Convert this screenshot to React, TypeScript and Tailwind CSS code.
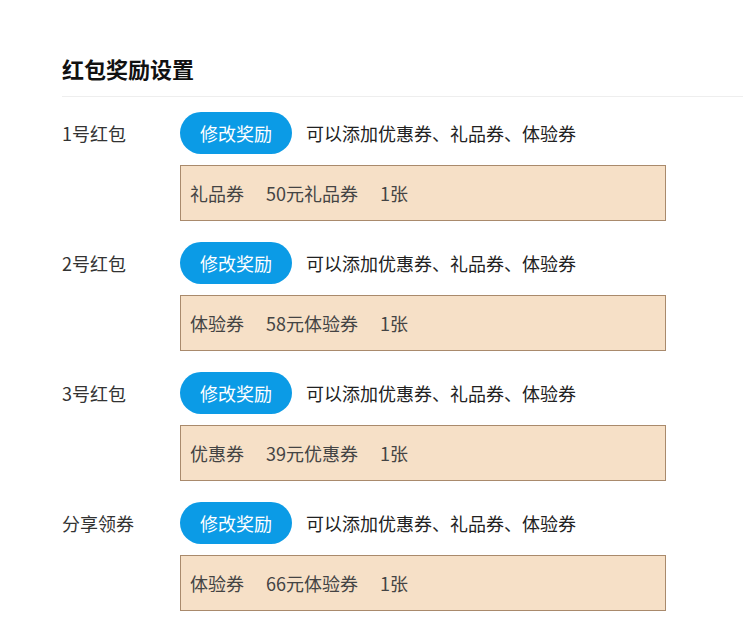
import React from "react";

const rows = [
  { label: "1号红包", items: ["礼品券", "50元礼品券", "1张"] },
  { label: "2号红包", items: ["体验券", "58元体验券", "1张"] },
  { label: "3号红包", items: ["优惠券", "39元优惠券", "1张"] },
  { label: "分享领券", items: ["体验券", "66元体验券", "1张"] },
];

export default function App() {
  return (
    <div
      className="min-h-[640px] bg-white pl-[62px] pt-[52px]"
      style={{ fontFamily: '"Noto Sans CJK SC", "Noto Sans", sans-serif' }}
    >
      <div className="h-[45px] border-b border-[#eeeeee]">
        <h1 className="text-[22px] leading-[32px] font-bold text-[#111]">红包奖励设置</h1>
      </div>
      <div className="pt-[15px] flex flex-col gap-[21px]">
        {rows.map((r) => (
          <div key={r.label} className="flex">
            <div className="w-[118px] h-[42px] flex items-center text-[18px] text-[#333]">{r.label}</div>
            <div className="flex flex-col gap-[11px]">
              <div className="flex items-center h-[42px]">
                <button className="w-[112px] h-[42px] rounded-full bg-[#0b9be6] text-white text-[18px] flex items-center justify-center">
                  修改奖励
                </button>
                <span className="ml-[14px] text-[18px] text-[#222]">可以添加优惠券、礼品券、体验券</span>
              </div>
              <div className="w-[486px] h-[56px] bg-[#f6e0c7] border border-[#a98a6c] flex items-center pl-[9px] gap-[22px] text-[18px] text-[#444]">
                {r.items.map((t) => (
                  <span key={t}>{t}</span>
                ))}
              </div>
            </div>
          </div>
        ))}
      </div>
    </div>
  );
}
